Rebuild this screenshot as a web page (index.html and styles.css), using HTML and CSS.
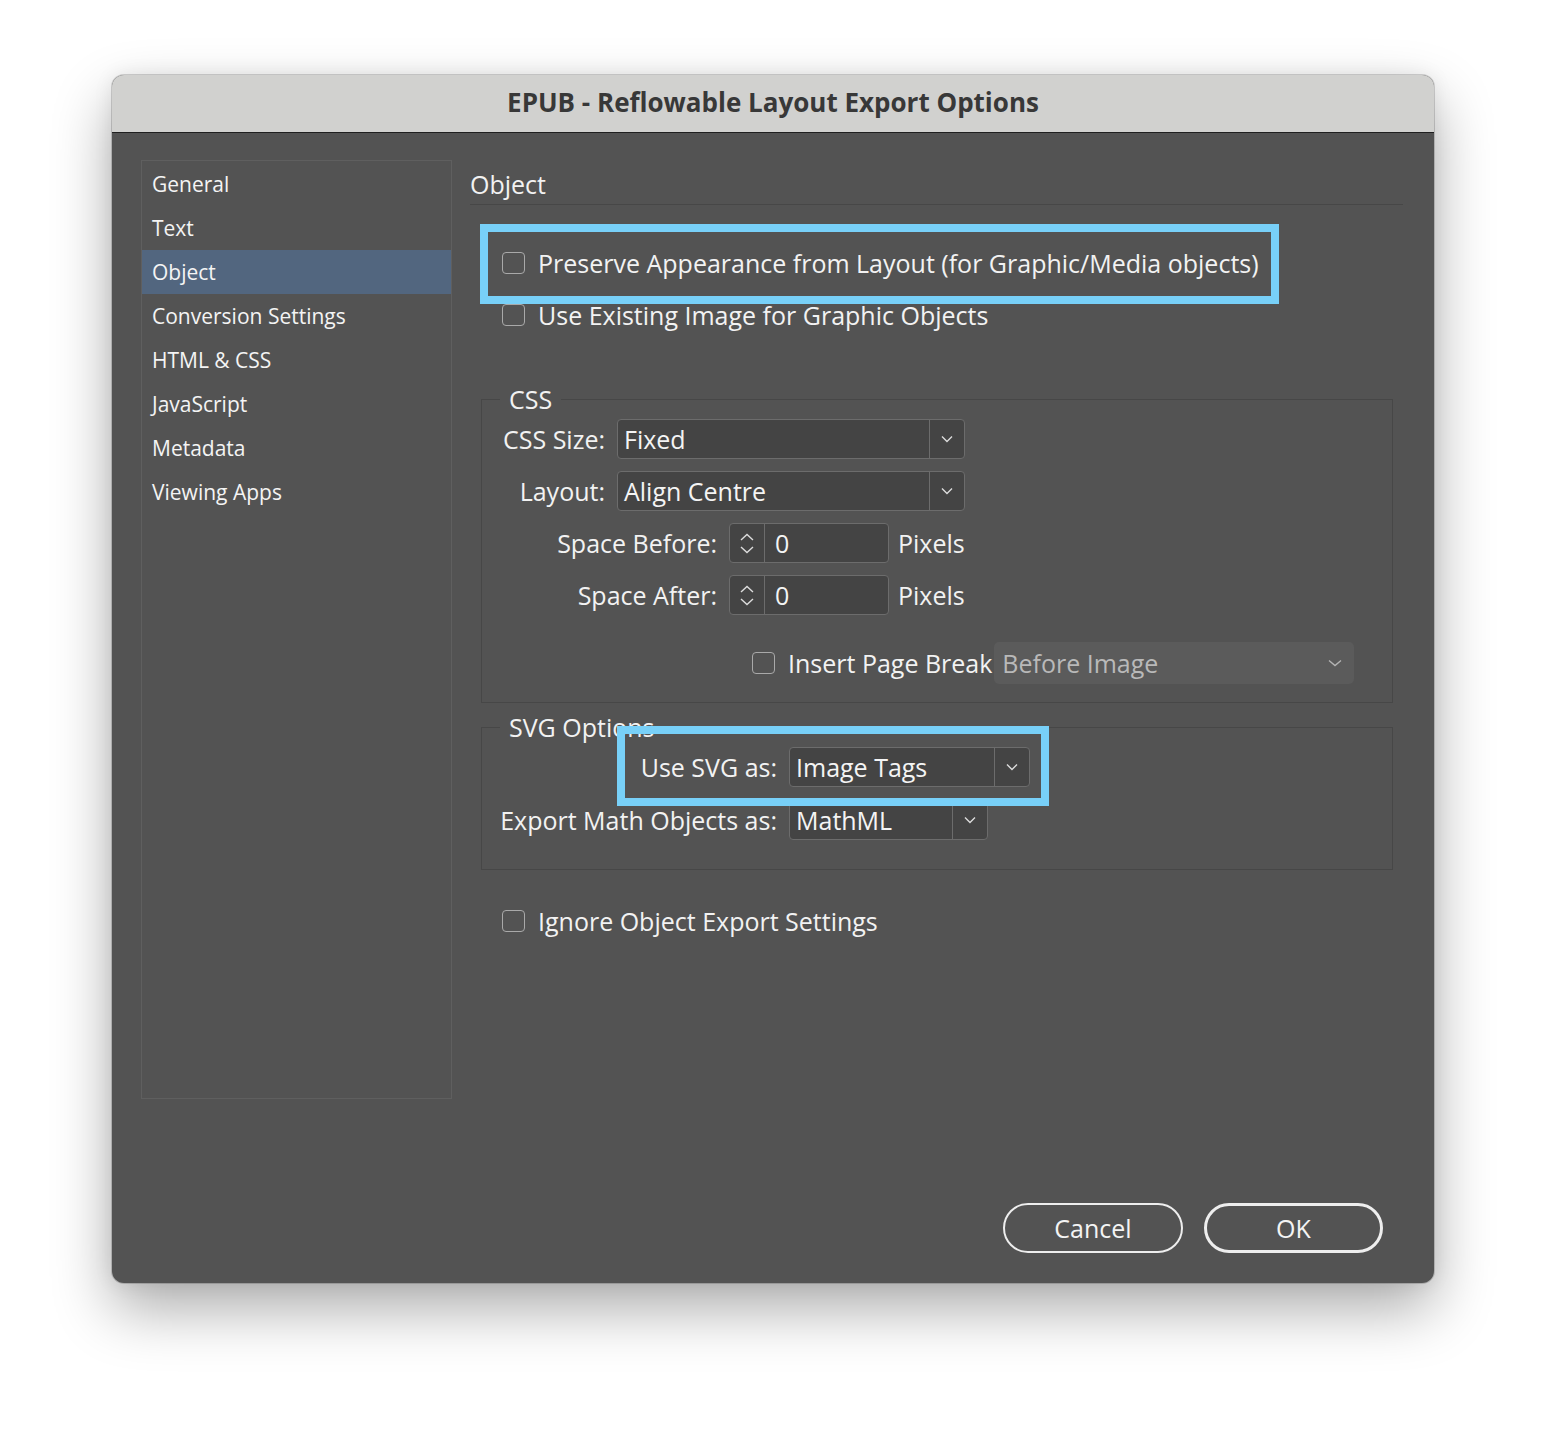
FILE: index.html
```html
<!DOCTYPE html>
<html lang="en">
<head>
<meta charset="utf-8">
<title>EPUB - Reflowable Layout Export Options</title>
<link rel="stylesheet" href="styles.css">
</head>
<body>
<div class="window">
  <div class="titlebar">EPUB - Reflowable Layout Export Options</div>
  <div class="body">
    <div class="main">
      <ul class="sidebar">
        <li>General</li>
        <li>Text</li>
        <li class="active">Object</li>
        <li>Conversion Settings</li>
        <li>HTML &amp; CSS</li>
        <li>JavaScript</li>
        <li>Metadata</li>
        <li>Viewing Apps</li>
      </ul>
      <div class="content">
        <h2 class="heading">Object</h2>
        <div class="highlight">
          <div class="check"><span class="box"></span><span>Preserve Appearance from Layout (for Graphic/Media objects)</span></div>
        </div>
        <div class="check check-2"><span class="box"></span><span>Use Existing Image for Graphic Objects</span></div>

        <fieldset class="group group-css">
          <legend>CSS</legend>
          <div class="row">
            <span class="label lw-css">CSS Size:</span>
            <div class="select sel-wide">
              <span class="value">Fixed</span>
              <span class="arrow"><svg width="12" height="8" viewBox="0 0 12 8"><path d="M1 1.5 L6 6.5 L11 1.5" fill="none" stroke="#dcdcdc" stroke-width="1.4"/></svg></span>
            </div>
          </div>
          <div class="row">
            <span class="label lw-css">Layout:</span>
            <div class="select sel-wide">
              <span class="value">Align Centre</span>
              <span class="arrow"><svg width="12" height="8" viewBox="0 0 12 8"><path d="M1 1.5 L6 6.5 L11 1.5" fill="none" stroke="#dcdcdc" stroke-width="1.4"/></svg></span>
            </div>
          </div>
          <div class="row">
            <span class="label lw-space">Space Before:</span>
            <div class="spin">
              <span class="arrows">
                <svg width="14" height="8" viewBox="0 0 14 8"><path d="M1 7 L7 1.5 L13 7" fill="none" stroke="#dcdcdc" stroke-width="1.4"/></svg>
                <svg width="14" height="8" viewBox="0 0 14 8"><path d="M1 1 L7 6.5 L13 1" fill="none" stroke="#dcdcdc" stroke-width="1.4"/></svg>
              </span>
              <span class="num">0</span>
            </div>
            <span class="unit">Pixels</span>
          </div>
          <div class="row">
            <span class="label lw-space">Space After:</span>
            <div class="spin">
              <span class="arrows">
                <svg width="14" height="8" viewBox="0 0 14 8"><path d="M1 7 L7 1.5 L13 7" fill="none" stroke="#dcdcdc" stroke-width="1.4"/></svg>
                <svg width="14" height="8" viewBox="0 0 14 8"><path d="M1 1 L7 6.5 L13 1" fill="none" stroke="#dcdcdc" stroke-width="1.4"/></svg>
              </span>
              <span class="num">0</span>
            </div>
            <span class="unit">Pixels</span>
          </div>
          <div class="row row-pb">
            <div class="check"><span class="box"></span><span>Insert Page Break</span></div>
            <div class="pb-select">
              <span>Before Image</span>
              <svg width="14" height="8" viewBox="0 0 14 8"><path d="M1 1.5 L7 6.5 L13 1.5" fill="none" stroke="#b4b4b4" stroke-width="1.4"/></svg>
            </div>
          </div>
        </fieldset>

        <fieldset class="group group-svg">
          <legend>SVG Options</legend>
          <div class="row svg-use">
            <span class="label lw-svg">Use SVG as:</span>
            <div class="select sel-svg">
              <span class="value">Image Tags</span>
              <span class="arrow"><svg width="12" height="8" viewBox="0 0 12 8"><path d="M1 1.5 L6 6.5 L11 1.5" fill="none" stroke="#dcdcdc" stroke-width="1.4"/></svg></span>
            </div>
          </div>
          <div class="row row-math">
            <span class="label lw-svg">Export Math Objects as:</span>
            <div class="select sel-math">
              <span class="value">MathML</span>
              <span class="arrow"><svg width="12" height="8" viewBox="0 0 12 8"><path d="M1 1.5 L6 6.5 L11 1.5" fill="none" stroke="#dcdcdc" stroke-width="1.4"/></svg></span>
            </div>
          </div>
        </fieldset>

        <div class="check check-ignore"><span class="box"></span><span>Ignore Object Export Settings</span></div>
      </div>
    </div>
    <div class="footer">
      <button class="btn">Cancel</button>
      <button class="btn btn-ok">OK</button>
    </div>
  </div>
</div>
</body>
</html>
```
FILE: styles.css
```css
*, *::before, *::after { box-sizing: border-box; }
html, body { margin: 0; }
body {
  background: #ffffff;
  font-family: "Open Sans", "Noto Sans", "Liberation Sans", sans-serif;
  padding: 75px 0 0 112px;
  height: 1432px;
}
.window {
  width: 1322px;
  height: 1208px;
  border-radius: 12px;
  background: #535353;
  box-shadow: 0 0 0 1px rgba(0,0,0,0.16), 0 26px 60px rgba(0,0,0,0.33), 0 0 20px rgba(0,0,0,0.08);
  display: flex;
  flex-direction: column;
  overflow: hidden;
}
.titlebar {
  height: 58px;
  flex: none;
  background: #d1d1cf;
  border-bottom: 1px solid #1f1f1f;
  display: flex;
  align-items: center;
  justify-content: center;
  font-weight: 700;
  font-size: 26px;
  color: #383838;
  padding-bottom: 3px;
}
.body {
  flex: 1;
  display: flex;
  flex-direction: column;
  padding: 27px 31px 30px 29px;
}
.main { display: flex; gap: 18px; }
.sidebar {
  list-style: none;
  margin: 0;
  padding: 1px 0 0;
  width: 311px;
  height: 939px;
  border: 1px solid #5f5f5f;
  flex: none;
}
.sidebar li {
  height: 44px;
  line-height: 44px;
  padding-left: 10px;
  font-size: 21px;
  color: #f4f4f4;
}
.sidebar li.active { background: #52667f; }
.content { flex: 1; color: #f2f2f2; }
.heading {
  margin: 10px 0 0;
  font-size: 25px;
  line-height: 28px;
  font-weight: 400;
  padding-bottom: 6px;
  border-bottom: 1px solid #474747;
  color: #f2f2f2;
}
.highlight {
  width: fit-content;
  margin: 19px 0 0 10px;
  border: 8px solid #78d0f8;
  padding: 17px 12px 19px 14px;
}
.check {
  display: flex;
  align-items: center;
  gap: 13px;
  font-size: 25px;
  line-height: 28px;
  color: #f2f2f2;
  white-space: nowrap;
}
.box {
  width: 23px;
  height: 22px;
  border: 1.5px solid #a9a9a9;
  border-radius: 4px;
  flex: none;
}
.check-2 { margin-left: 32px; line-height: 22px; }
.group {
  border: 1px solid #474747;
  margin: 59px 10px 0 11px;
  padding: 6px 0 18px 0;
  min-width: 0;
}
.group legend {
  margin-left: 18px;
  padding: 0 9px;
  font-size: 25px;
  line-height: 28px;
  color: #f2f2f2;
}
.group-svg { margin-top: 10px; padding-bottom: 29px; }
.row {
  display: flex;
  align-items: center;
  gap: 12px;
  height: 40px;
}
.row + .row { margin-top: 12px; }
.label {
  flex: none;
  text-align: right;
  font-size: 25px;
  color: #f2f2f2;
  white-space: nowrap;
}
.lw-css { width: 123px; }
.lw-space { width: 235px; }
.lw-svg { width: 295px; }
.select {
  display: flex;
  height: 40px;
  border: 1px solid #6c6c6c;
  border-radius: 4px;
  background: #444444;
  font-size: 25px;
  color: #f4f4f4;
}
.select .value {
  flex: 1;
  padding-left: 6px;
  display: flex;
  align-items: center;
  white-space: nowrap;
}
.select .arrow {
  width: 35px;
  border-left: 1px solid #6c6c6c;
  display: flex;
  align-items: center;
  justify-content: center;
}
.sel-wide { width: 348px; }
.sel-svg { width: 241px; }
.sel-math { width: 199px; }
.spin {
  display: flex;
  width: 160px;
  height: 40px;
  border: 1px solid #6c6c6c;
  border-radius: 4px;
  background: #444444;
  font-size: 25px;
  color: #f4f4f4;
}
.spin .arrows {
  width: 35px;
  border-right: 1px solid #6c6c6c;
  display: flex;
  flex-direction: column;
  align-items: center;
  justify-content: center;
  gap: 5px;
}
.spin .num {
  flex: 1;
  padding-left: 10px;
  display: flex;
  align-items: center;
}
.unit { font-size: 25px; color: #f2f2f2; margin-left: -3px; }
.row.row-pb {
  margin-top: 27px;
  height: 42px;
  padding-left: 270px;
  gap: 2px;
}
.pb-select {
  width: 360px;
  height: 42px;
  background: #5b5b5b;
  border-radius: 5px;
  color: #b9b9b9;
  font-size: 25px;
  padding: 0 12px 0 8px;
  display: flex;
  align-items: center;
  justify-content: space-between;
}
.row.row-math { margin-top: 13px; }
.row.svg-use { position: relative; }
.row.svg-use::after {
  content: "";
  position: absolute;
  left: 135px;
  top: -21px;
  width: 432px;
  height: 80px;
  border: 8px solid #78d0f8;
  pointer-events: none;
}
.check-ignore { margin: 37px 0 0 32px; }
.footer {
  margin-top: auto;
  display: flex;
  justify-content: flex-end;
  gap: 21px;
  padding-right: 20px;
}
.btn {
  width: 180px;
  height: 50px;
  border-radius: 25px;
  background: transparent;
  color: #f4f4f4;
  font-family: "Open Sans", "Noto Sans", sans-serif;
  font-size: 25px;
  border: 2px solid #eeeeee;
  padding: 0;
}
.btn-ok { width: 179px; border-width: 3px; }
```
